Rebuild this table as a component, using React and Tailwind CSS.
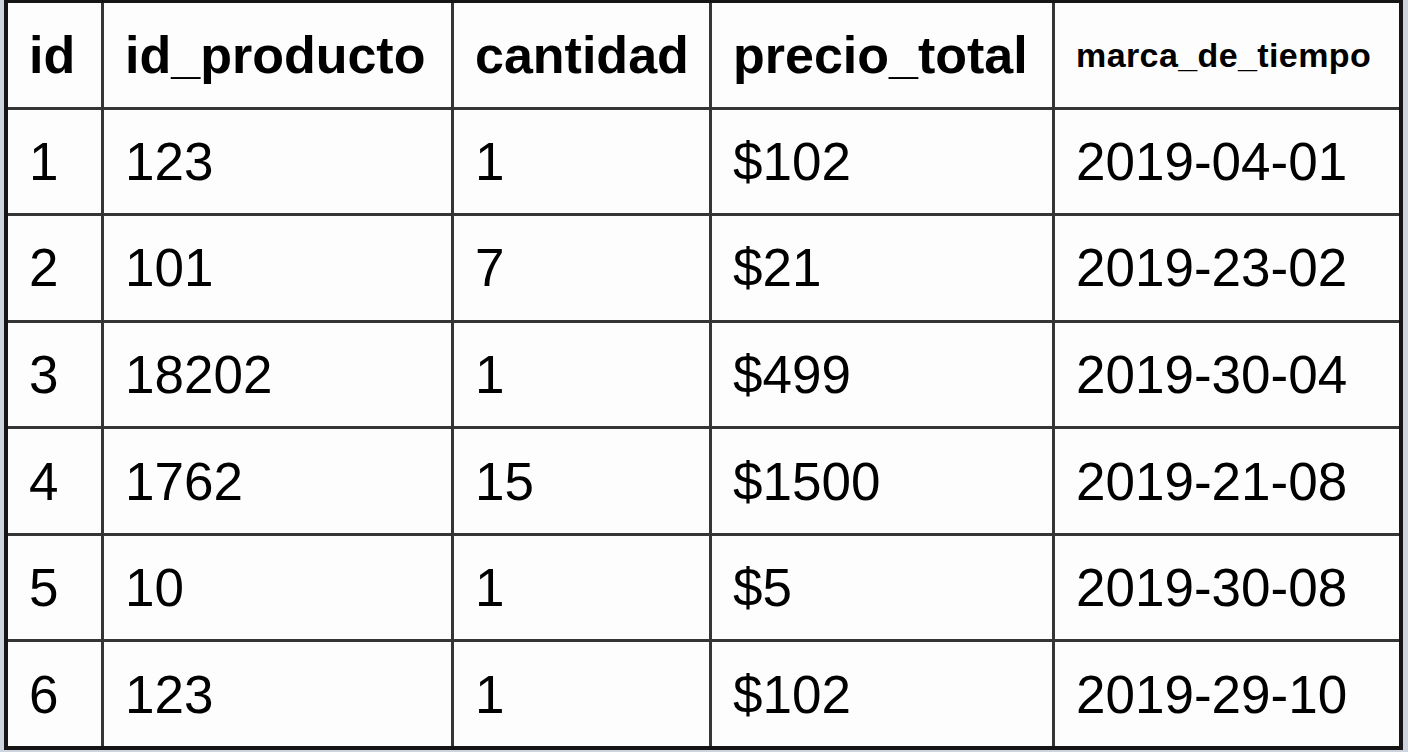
import React from "react";

const headers = ["id", "id_producto", "cantidad", "precio_total", "marca_de_tiempo"];

const rows = [
  ["1", "123", "1", "$102", "2019-04-01"],
  ["2", "101", "7", "$21", "2019-23-02"],
  ["3", "18202", "1", "$499", "2019-30-04"],
  ["4", "1762", "15", "$1500", "2019-21-08"],
  ["5", "10", "1", "$5", "2019-30-08"],
  ["6", "123", "1", "$102", "2019-29-10"],
];

const App = () => {
  return (
    <div
      className="w-[1408px] h-[752px] bg-[#cdd4de] overflow-hidden"
      style={{ fontFamily: '"Liberation Sans", Arial, sans-serif' }}
    >
      <div className="ml-[4px] w-[1399px] h-[750px] border-x-4 border-b-4 border-t-[3px] border-[#151515] bg-[#353535] grid grid-cols-[93px_347px_255px_340px_344px] grid-rows-7 gap-[3px] text-black">
        {/* Header */}
        {headers.map((h, i) => (
          <div key={h} className="bg-[#fdfdfd] flex items-center pl-[21px]">
            {i === 4 ? (
              <span className="text-[34px] font-bold leading-none tracking-[0.4px]">{h}</span>
            ) : (
              <span className="text-[52px] font-bold leading-none">{h}</span>
            )}
          </div>
        ))}

        {/* Rows */}
        {rows.map((row, r) =>
          row.map((cell, c) => (
            <div key={`${r}-${c}`} className="bg-[#fdfdfd] flex items-center pl-[21px]">
              <span className="text-[53px] leading-none">{cell}</span>
            </div>
          ))
        )}
      </div>
    </div>
  );
};

export default App;
